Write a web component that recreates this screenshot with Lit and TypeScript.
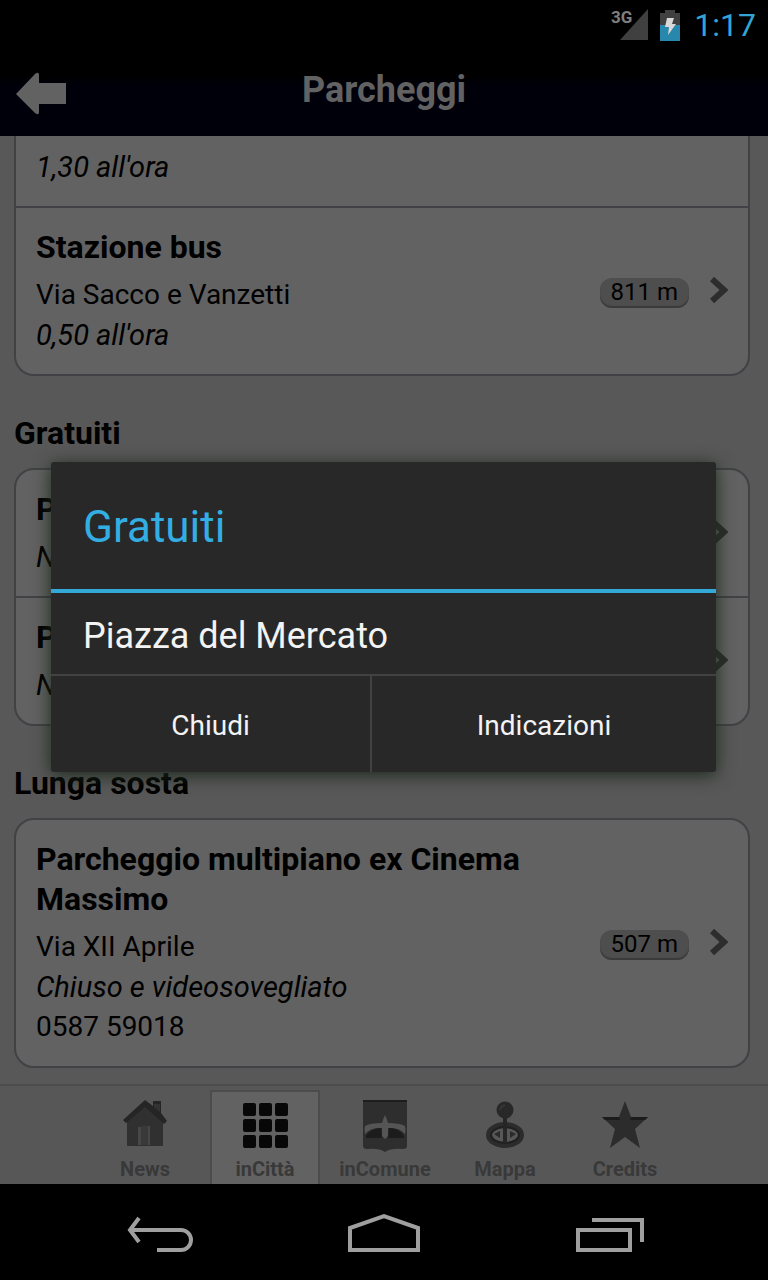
import { LitElement, html, css, svg, nothing } from "lit";
import { customElement, property } from "lit/decorators.js";

interface Parking {
  name: string;
  address?: string;
  note?: string;
  phone?: string;
  distance?: string;
}

interface Section {
  heading?: string;
  items: Parking[];
}

const sections: Section[] = [
  {
    items: [
      { name: "", note: "1,30 all'ora" },
      { name: "Stazione bus", address: "Via Sacco e Vanzetti", note: "0,50 all'ora", distance: "811 m" },
    ],
  },
  {
    heading: "Gratuiti",
    items: [
      { name: "P", note: "N" },
      { name: "P", note: "N" },
    ],
  },
  {
    heading: "Lunga sosta",
    items: [
      {
        name: "Parcheggio multipiano ex Cinema Massimo",
        address: "Via XII Aprile",
        note: "Chiuso e videosovegliato",
        phone: "0587 59018",
        distance: "507 m",
      },
    ],
  },
];

const houseIcon = svg`
  <path fill="#303030" d="M4 20L22 5l18 15v26H4z"/>
  <path fill="#474747" d="M15 27h3v18h-3zM25 26h2v19h-2z"/>
  <path fill="#393939" d="M18 26h7v19h-7z"/>
  <path fill="#252525" d="M22 0l8 6V1h8v12l6 8-3 3L22 7 3 23l-3-3z"/>
  <path fill="#333" d="M31 4h6v8l-6-5z"/>`;

const gridIcon = svg`${[0, 16, 32].map((y) =>
  [0, 16, 32].map((x) => svg`<rect x=${x} y=${y} width="13" height="13" rx="2" fill="#080808"/>`)
)}`;

const crestIcon = svg`
  <path fill="#2e2e2e" d="M0 0h44v46q0 3-4 3-12-1-18 3-6-4-18-3-4 0-4-3z"/>
  <path fill="#1d1d1d" d="M0 0h44v2H0z"/>
  <path fill="#555" d="M22 15q2 4 3 8 12 0 17 3 1 4 0 8-5-6-14-6h-3v8l-3 3-3-3v-8h-3q-9 0-14 6-1-4 0-8 5-3 17-3 1-4 3-8z"/>
  <path fill="#1c1c1c" d="M3 36q5-8 15-8l1 9-1 1H3zM41 36q-5-8-15-8l-1 9 1 1h15z"/>`;

const mapIcon = svg`
  <ellipse cx="22" cy="34" rx="16" ry="10" fill="none" stroke="#2c2c2c" stroke-width="6"/>
  <ellipse cx="22" cy="34" rx="14" ry="8" fill="none" stroke="#202020" stroke-width="2"/>
  <path fill="#2a2a2a" d="M11 33l6-3v7zM33 33l-6-3v7z"/>
  <path fill="#262626" d="M20 16h4v26h-4z"/>
  <circle cx="22" cy="9" r="8.500" fill="#282828"/>
  <path d="M17 9q1-4 5-5" stroke="#363636" stroke-width="2" fill="none"/>`;

const starIcon = svg`
  <path fill="#2c2c2c" d="M23 0l6 16h17L33 28l5 19-15-11L8 47l5-19L0 16h17z"/>
  <path fill="#1c1c1c" d="M0 16h17l1 3H3zM46 16H29l-1 3h15z"/>`;

const tabs = [
  { label: "News", icon: houseIcon, box: "0 0 44 52", active: false },
  { label: "inCittà", icon: gridIcon, box: "0 -3 45 52", active: true },
  { label: "inComune", icon: crestIcon, box: "0 0 44 52", active: false },
  { label: "Mappa", icon: mapIcon, box: "0 -1 44 52", active: false },
  { label: "Credits", icon: starIcon, box: "0 -1 46 52", active: false },
];

@customElement("status-bar")
export class StatusBar extends LitElement {
  static styles = css`
    :host {
      display: flex;
      justify-content: flex-end;
      align-items: center;
      height: 50px;
      padding-right: 12px;
      background: #000;
      font-size: 32px;
      color: #33a5d5;
    }
    .signal { display: flex; align-items: flex-start; }
    .network { font-size: 17px; font-weight: 700; line-height: 17px; color: #7f7f7f; margin-right: -12px; }
    .battery { margin: 0 14px 0 12px; }
    svg { display: block; }
  `;
  render() {
    return html`
      <span class="signal">
        <span class="network">3G</span>
        <svg width="28" height="32" viewBox="0 0 28 32"><path fill="#404040" d="M28 0v31H0z"/></svg>
      </span>
      <svg class="battery" width="20" height="31" viewBox="0 0 20 31">
        <path fill="#404040" d="M0 3h5V0h10v3h5v12H0z"/>
        <path fill="#2787ac" d="M0 15h20v16H0z"/>
        <path fill="#d8d8d8" d="M7 8h7l-2 6h4L8 25l1-8H5z"/>
      </svg>
      <time>1:17</time>
    `;
  }
}

@customElement("parking-row")
export class ParkingRow extends LitElement {
  @property({ attribute: false }) parking!: Parking;

  static styles = css`
    :host {
      display: flex;
      align-items: center;
      gap: 20px;
      padding: 19px 20px;
      font-size: 28px;
      line-height: 40px;
    }
    .info { flex: 1; min-width: 0; }
    .name { margin: 0 0 8px; font-size: 32px; font-weight: 700; line-height: 40px; }
    .line { margin: 0; }
    .note { font-size: 29px; font-style: italic; }
    .distance {
      margin-top: 4px;
      padding: 0 11px 2px;
      border-radius: 12px;
      background: #4e4e4e;
      box-shadow: inset 0 -2px 1px #3a3a3a;
      font-size: 24px;
      line-height: 28px;
    }
    .chevron { display: block; flex: none; }
  `;
  render() {
    const p = this.parking;
    return html`
      <div class="info">
        ${p.name ? html`<h3 class="name">${p.name}</h3>` : nothing}
        ${p.address ? html`<p class="line">${p.address}</p>` : nothing}
        ${p.note ? html`<p class="line note">${p.note}</p>` : nothing}
        ${p.phone ? html`<p class="line">${p.phone}</p>` : nothing}
      </div>
      ${p.distance ? html`<span class="distance">${p.distance}</span>` : nothing}
      ${p.name
        ? html`<svg class="chevron" width="19" height="28" viewBox="0 0 19 28">
            <path d="M3 2l12 11L3 24" fill="none" stroke="#2d2d2d" stroke-width="6"/>
          </svg>`
        : nothing}
    `;
  }
}

@customElement("parking-dialog")
export class ParkingDialog extends LitElement {
  static styles = css`
    :host {
      position: absolute;
      inset: 50px 0 96px;
      display: flex;
      align-items: center;
      padding: 0 52px 0 51px;
    }
    .dialog {
      flex: 1;
      border-radius: 3px;
      background: #282828;
      color: #f3f3f3;
      box-shadow: 0 3px 18px #1c281c;
    }
    .title {
      margin: 0;
      padding: 37px 32px 34px;
      border-bottom: 4px solid #33a9d8;
      font-size: 44px;
      font-weight: 400;
      line-height: 56px;
      color: #33aee2;
    }
    .message { margin: 0; padding: 19px 32px 14px; font-size: 36px; line-height: 48px; }
    .actions { display: grid; grid-template-columns: 319fr 346fr; border-top: 2px solid #424242; }
    .action {
      height: 96px;
      border: 0;
      padding: 2px 0 0;
      background: none;
      color: inherit;
      font: inherit;
      font-size: 28px;
    }
    .action + .action { border-left: 2px solid #424242; }
  `;
  render() {
    return html`
      <section class="dialog" role="dialog" aria-labelledby="title">
        <h2 class="title" id="title">Gratuiti</h2>
        <p class="message">Piazza del Mercato</p>
        <div class="actions">
          <button class="action">Chiudi</button>
          <button class="action">Indicazioni</button>
        </div>
      </section>
    `;
  }
}

@customElement("app-root")
export class AppRoot extends LitElement {
  static styles = css`
    :host {
      position: relative;
      display: flex;
      flex-direction: column;
      height: 100vh;
      overflow: hidden;
      background: #585858;
      color: #000;
      font-family: Roboto, "Noto Sans", sans-serif;
    }
    button { border: 0; padding: 0; background: none; font: inherit; color: inherit; }
    svg { display: block; }
    .header {
      display: grid;
      grid-template-columns: 1fr auto 1fr;
      align-items: center;
      height: 86px;
      padding: 0 16px;
      box-sizing: border-box;
      background: linear-gradient(#000 30%, #00000a 40%);
    }
    .back { justify-self: start; }
    .title { margin: 0; padding-bottom: 6px; font-size: 36px; line-height: 40px; color: #626262; }
    .content { flex: 1; min-height: 0; overflow: hidden; padding: 0 18px 0 14px; }
    .heading { margin: 37px 0 15px; font-size: 32px; line-height: 40px; }
    .card { border: 2px solid #414146; border-radius: 20px; background: #626262; }
    .card.continued { border-top: 0; border-radius: 0 0 20px 20px; }
    .continued .row:first-child { padding-top: 11px; }
    .row + .row { border-top: 2px solid #414146; }
    .tabs {
      display: flex;
      justify-content: center;
      height: 100px;
      box-sizing: border-box;
      padding: 4px 0 0 2px;
      border-top: 2px solid #4c4c4c;
      background: #575757;
    }
    .tab {
      display: flex;
      flex-direction: column;
      align-items: center;
      width: 110px;
      margin: 0 5px;
      box-sizing: border-box;
      padding-top: 8px;
      border: 2px solid transparent;
      border-bottom: 0;
      font-size: 20px;
      font-weight: 700;
      line-height: 22px;
      color: #393939;
      white-space: nowrap;
    }
    .tab.active { border-color: #4c4c4c; background: #626262; }
    .picture { margin-bottom: 6px; }
    .navbar {
      display: grid;
      grid-template-columns: repeat(3, 1fr);
      justify-items: center;
      align-items: center;
      height: 96px;
      padding: 0 46px;
      background: #000;
    }
  `;

  render() {
    return html`
      <status-bar></status-bar>
      <header class="header">
        <button class="back" aria-label="Indietro">
          <svg width="50" height="46" viewBox="0 0 50 46"><path fill="#626262" d="M0 24L19 4q4-3 4 1v8h27v21H23v8q0 4-4 1z"/></svg>
        </button>
        <h1 class="title">Parcheggi</h1>
      </header>
      <main class="content">
        ${sections.map(
          (s) => html`
            ${s.heading ? html`<h2 class="heading">${s.heading}</h2>` : nothing}
            <div class="card ${s.heading ? "" : "continued"}">
              ${s.items.map((p) => html`<parking-row class="row" .parking=${p}></parking-row>`)}
            </div>
          `
        )}
      </main>
      <nav class="tabs">
        ${tabs.map((t) => {
          const [, , w, h] = t.box.split(" ");
          return html`<button class="tab ${t.active ? "active" : ""}">
            <span class="picture"><svg width=${w} height=${h} viewBox=${t.box}>${t.icon}</svg></span>
            ${t.label}
          </button>`;
        })}
      </nav>
      <footer class="navbar">
        <button aria-label="Indietro">
          <svg width="72" height="40" viewBox="0 0 72 40" fill="none" stroke="#9f9f9f" stroke-width="4">
            <path d="M16 6L7 18l9 12M7 18h51a10 10 0 0 1 0 20H34"/>
          </svg>
        </button>
        <button aria-label="Home">
          <svg width="72" height="40" viewBox="0 0 72 40" fill="none" stroke="#9f9f9f" stroke-width="4">
            <path d="M2 38V16L36 4l34 12v22z"/>
          </svg>
        </button>
        <button aria-label="App recenti">
          <svg width="72" height="40" viewBox="0 0 72 40" fill="none" stroke="#9f9f9f" stroke-width="4">
            <path d="M5 18h52v20H5zM19 8h50v22"/>
          </svg>
        </button>
      </footer>
      <parking-dialog></parking-dialog>
    `;
  }
}
